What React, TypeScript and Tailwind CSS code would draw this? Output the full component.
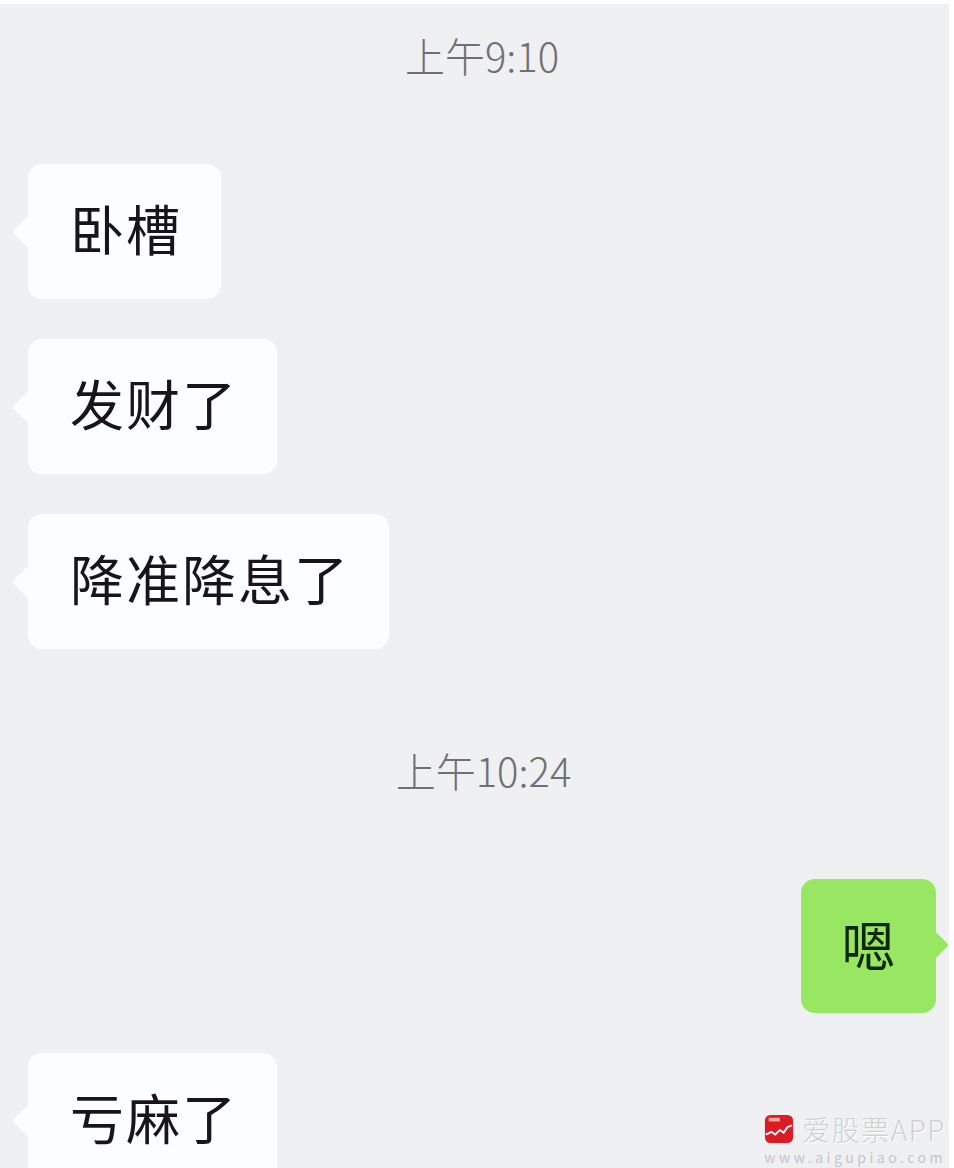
import React from "react";

const cjk = "font-['Noto_Sans_CJK_SC','Noto_Sans',sans-serif]";

const Stamp = ({ text }: { text: string }) => (
  <div className="flex h-[60px] items-center justify-center text-[40px] leading-[60px] font-light text-[#6f7072]">
    {text}
  </div>
);

const Bubble = ({ text }: { text: string }) => (
  <div className="relative h-[135px] w-fit rounded-[14px] bg-[#fcfdfe] pr-[39px] pl-[42px] text-[54px] leading-[128px] font-normal tracking-[2px] text-[#17141c]">
    <span className="absolute top-[56px] left-[-11px] h-[24px] w-[24px] rotate-45 rounded-[3px] bg-[#fcfdfe]" />
    {text}
  </div>
);

const Mine = ({ text }: { text: string }) => (
  <div className="relative h-[134px] w-[135px] self-end rounded-[14px] bg-[#97e763] text-center text-[54px] leading-[130px] text-[#10260a]">
    <span className="absolute top-[54px] right-[-8px] h-[24px] w-[24px] rotate-45 rounded-[3px] bg-[#97e763]" />
    {text}
  </div>
);

const Watermark = () => (
  <div className="absolute right-[8px] bottom-[3px] flex w-[190px] flex-col items-end">
    <div className="flex items-center gap-[8px]">
      <svg width="30" height="30" viewBox="0 0 32 32">
        <rect x="1" y="1" width="30" height="30" rx="6" fill="#dc1c24" />
        <rect x="5" y="4" width="12" height="4" fill="#f2a0a0" />
        <path d="M2 22 L8 19 L12 22 L17 17 L21 20 L25 14 L30 12" fill="none" stroke="#fff" strokeWidth="2" />
      </svg>
      <span className="text-[28px] leading-[32px] font-light tracking-[1.5px] whitespace-nowrap text-[#cfd0d3] [text-shadow:1px_1px_0_#fff]">
        爱股票APP
      </span>
    </div>
    <div className="mt-[4px] text-[14px] leading-[16px] tracking-[3.5px] whitespace-nowrap text-[#c4c5c8]">
      www.aigupiao.com
    </div>
  </div>
);

export default function App() {
  return (
    <div className={`relative h-[1168px] w-[954px] overflow-hidden bg-white ${cjk}`}>
      <div className="mt-[4px] mr-[5px] flex h-[1164px] flex-col bg-[#eff0f2] pr-[13px] pl-[28px]">
        <div className="mt-[21px]">
          <Stamp text="上午9:10" />
        </div>
        <div className="mt-[79px] flex flex-col gap-[40px]">
          <Bubble text="卧槽" />
          <Bubble text="发财了" />
          <Bubble text="降准降息了" />
        </div>
        <div className="mt-[91px] ml-[3px]">
          <Stamp text="上午10:24" />
        </div>
        <div className="mt-[79px] flex flex-col">
          <Mine text="嗯" />
        </div>
        <div className="mt-[40px]">
          <Bubble text="亏麻了" />
        </div>
      </div>
      <Watermark />
    </div>
  );
}
